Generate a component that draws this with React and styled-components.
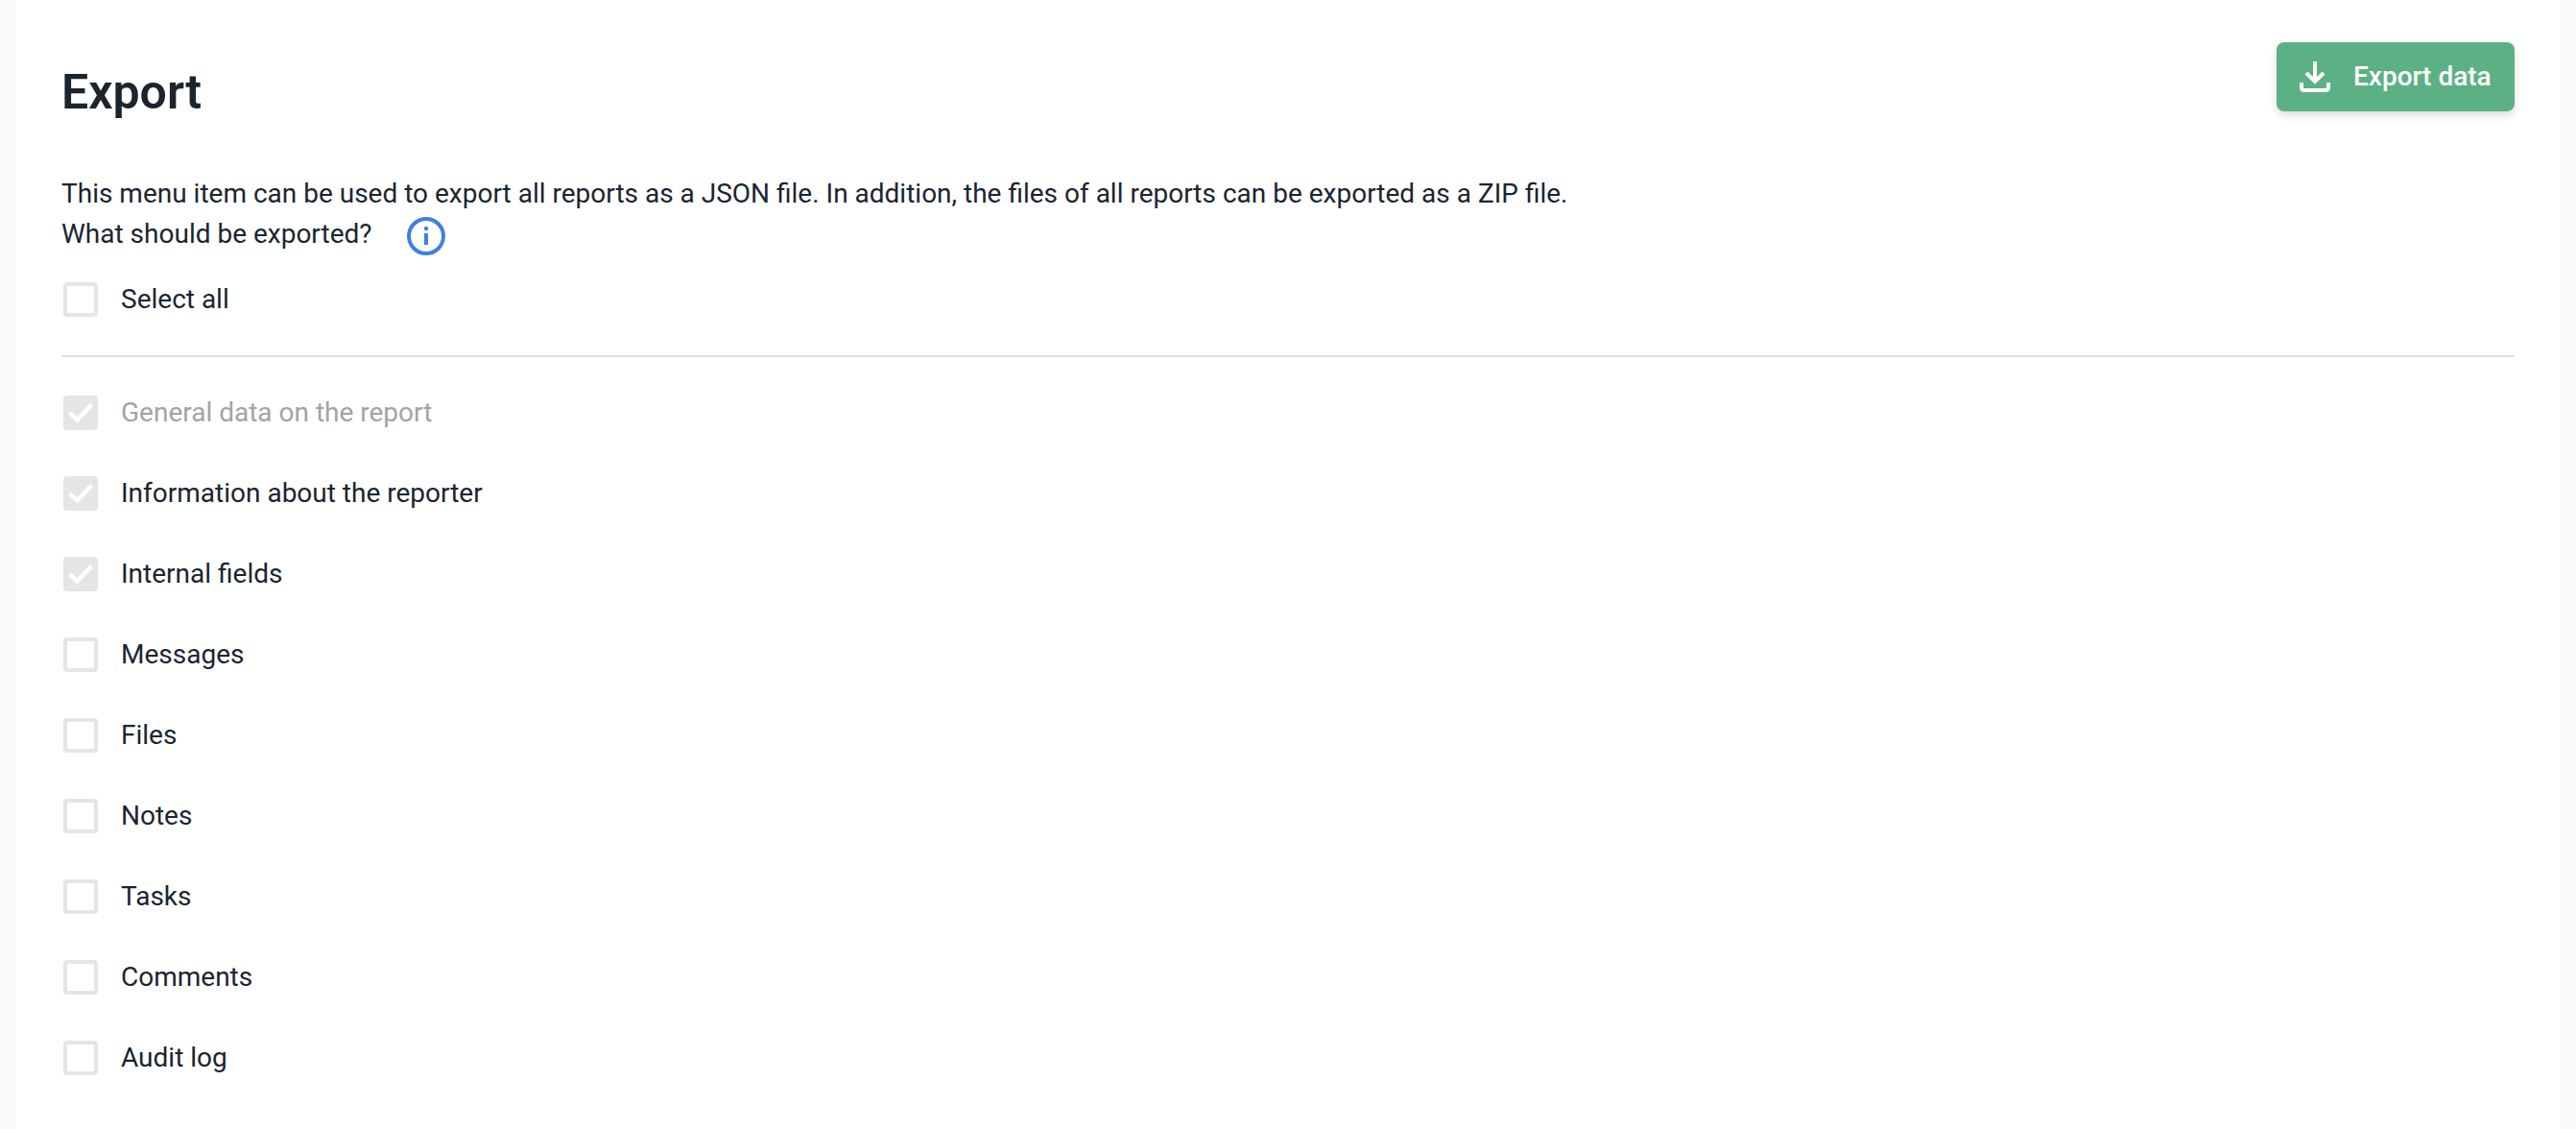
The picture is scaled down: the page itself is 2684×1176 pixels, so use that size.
import React from "react";
import styled, { createGlobalStyle } from "styled-components";

const GlobalStyle = createGlobalStyle`
  html, body {
    margin: 0;
    padding: 0;
    height: 100%;
    overflow: hidden;
    background: #f8f9fb;
    font-family: Roboto, "Liberation Sans", sans-serif;
  }
`;

const Page = styled.div`
  height: 1176px;
  padding: 0 16px;
  box-sizing: border-box;
`;

const Card = styled.main`
  height: 100%;
  box-sizing: border-box;
  background: #fff;
  padding: 44px 48px 0;
  color: #1a2530;
  box-shadow: 0 0 4px rgba(30, 40, 70, 0.04);
`;

const Header = styled.div`
  display: flex;
  justify-content: space-between;
  align-items: flex-start;
  height: 136px;
`;

const Title = styled.h1`
  margin: 24px 0 0;
  font-size: 50px;
  line-height: 56px;
  font-weight: 600;
  color: #1a2530;
`;

const ExportButton = styled.button`
  display: flex;
  align-items: center;
  gap: 24px;
  width: 248px;
  height: 72px;
  padding: 0 0 0 24px;
  box-sizing: border-box;
  border: none;
  border-radius: 8px;
  background: #5cb184;
  color: #fff;
  font-family: inherit;
  font-size: 28px;
  font-weight: 500;
  box-shadow: 0 4px 10px rgba(0, 0, 0, 0.14);
  cursor: pointer;
`;

const Intro = styled.p`
  margin: 0;
  font-size: 28px;
  line-height: 43px;
`;

const Question = styled.div`
  display: flex;
  align-items: flex-start;
  gap: 36px;
  font-size: 28px;
  line-height: 41px;
`;

const InfoIcon = styled.svg`
  width: 40px;
  height: 40px;
  margin: 3px 0 -6px;
  flex: none;
`;

const Row = styled.label`
  display: flex;
  align-items: center;
  gap: 24px;
  height: 84px;
  padding-left: 2px;
  font-size: 28px;
  color: ${(p) => (p.$muted ? "#a3a3a3" : "#1a2530")};
`;

const SelectAllRow = styled(Row)`
  height: 36px;
  margin-top: 30px;
`;

const LabelText = styled.span`
  margin-bottom: 2px;
`;

const Box = styled.span`
  display: flex;
  align-items: center;
  justify-content: center;
  width: 36px;
  height: 36px;
  box-sizing: border-box;
  flex: none;
  border: 4px solid #e5e5e7;
  border-radius: 4px;
  background: ${(p) => (p.$checked ? "#e5e5e7" : "#fff")};
`;

const Divider = styled.hr`
  margin: 40px 0 16px;
  height: 2px;
  border: none;
  background: #dedfe1;
`;

const items = [
  { label: "General data on the report", checked: true, muted: true },
  { label: "Information about the reporter", checked: true },
  { label: "Internal fields", checked: true },
  { label: "Messages" },
  { label: "Files" },
  { label: "Notes" },
  { label: "Tasks" },
  { label: "Comments" },
  { label: "Audit log" },
];

function Check() {
  return (
    <svg width="26" height="20" viewBox="0 0 26 20" fill="none">
      <path d="M1.5 10 L9.5 17.5 L24.5 1.5" stroke="#fff" strokeWidth="4.5" />
    </svg>
  );
}

export default function App() {
  return (
    <Page>
      <GlobalStyle />
      <Card>
        <Header>
          <Title>Export</Title>
          <ExportButton>
            <svg width="32" height="32" viewBox="0 0 32 32" fill="none" stroke="#fff" strokeWidth="4">
              <path d="M16 0 V20" />
              <path d="M7 12 L16 21 L25 12" />
              <path d="M2 22 V27 Q2 30 5 30 H27 Q30 30 30 27 V22" />
            </svg>
            <LabelText>Export data</LabelText>
          </ExportButton>
        </Header>
        <Intro>
          This menu item can be used to export all reports as a JSON file. In addition, the files of all reports can be exported as a ZIP file.
        </Intro>
        <Question>
          What should be exported?
          <InfoIcon viewBox="0 0 40 40" fill="none">
            <circle cx="20" cy="20" r="18" stroke="#3f80e0" strokeWidth="4" />
            <circle cx="20" cy="12" r="2.2" fill="#3f80e0" />
            <rect x="18" y="17" width="4" height="12" fill="#3f80e0" />
          </InfoIcon>
        </Question>
        <SelectAllRow>
          <Box />
          <LabelText>Select all</LabelText>
        </SelectAllRow>
        <Divider />
        {items.map((item) => (
          <Row key={item.label} $muted={item.muted}>
            <Box $checked={item.checked}>{item.checked && <Check />}</Box>
            <LabelText>{item.label}</LabelText>
          </Row>
        ))}
      </Card>
    </Page>
  );
}
